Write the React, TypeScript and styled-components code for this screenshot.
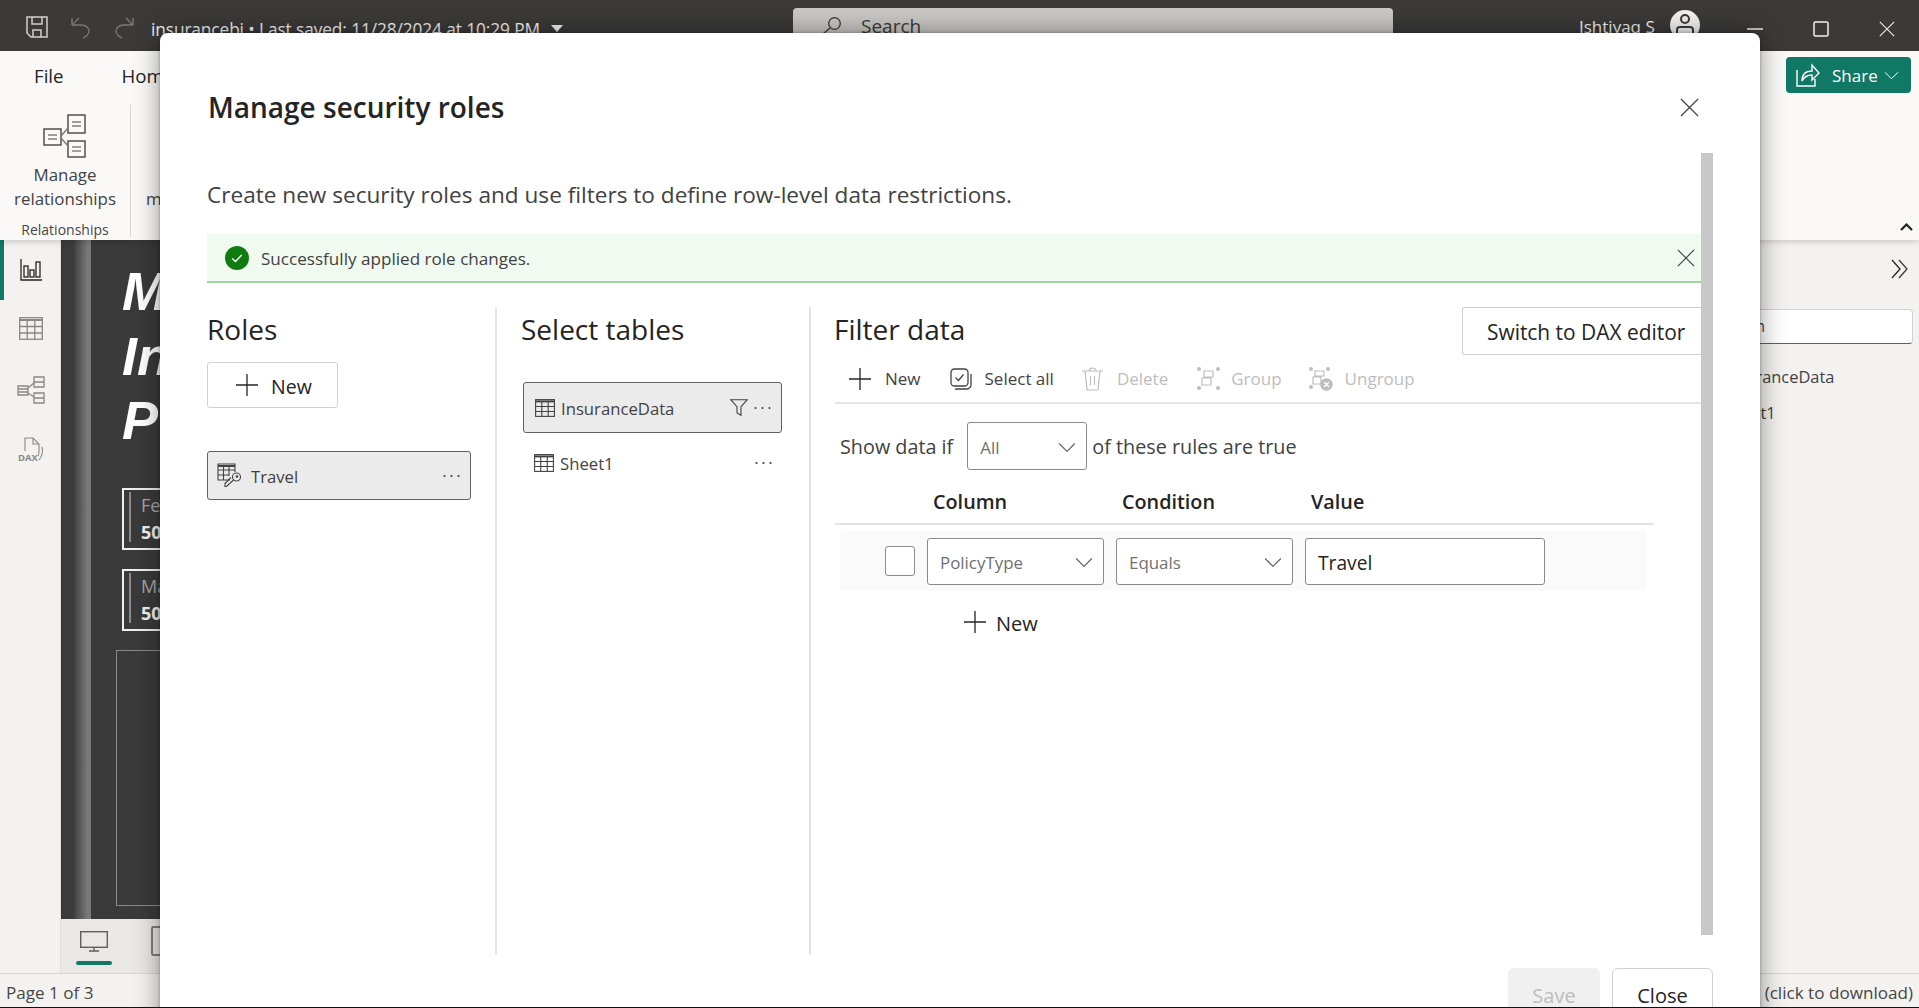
import React from "react";
import styled, { createGlobalStyle } from "styled-components";

const FONT = `"Open Sans", "Noto Sans", "Liberation Sans", sans-serif`;

const Global = createGlobalStyle`
  html, body { margin: 0; padding: 0; height: 100%; overflow: hidden; background: #f3f2f1; }
  body { font-family: ${FONT}; color: #242424; }
  * { box-sizing: border-box; }
  svg { display: block; flex: none; }
`;

const Shell = styled.div`
  width: 1919px; height: 1008px; display: flex; flex-direction: column; overflow: hidden; position: relative;
  border-bottom: 1px solid #111;
`;

/* title bar */
const TopBar = styled.header`
  height: 51px; flex: none; background: #3b3a39; display: flex; color: #f3f2f1;
`;
const TopLeft = styled.div`
  width: 793px; display: flex; padding: 16px 0 0 26px; align-items: flex-start;
`;
const QuickIcons = styled.div`display: flex; gap: 23px; margin-right: 17px;`;
const FileName = styled.span`font-size: 17.3px; line-height: 26px; margin-top: 1px; white-space: nowrap; letter-spacing: -.1px;`;
const Caret = styled.span`
  width: 0; height: 0; margin: 9px 0 0 11px;
  border-left: 6px solid transparent; border-right: 6px solid transparent; border-top: 7px solid #f3f2f1;
`;
const SearchBox = styled.div`
  width: 600px; height: 36px; margin-top: 8px; border-radius: 4px; background: #c9c8c6;
  display: flex; align-items: center; gap: 19px; padding-left: 29px; color: #3b3a39; font-size: 19px;
`;
const TopRight = styled.div`flex: 1; position: relative; display: flex; padding: 9px 0 0 186px;`;
const UserName = styled.span`font-size: 17px; line-height: 26px; margin-top: 5px; white-space: nowrap; width: 91px;`;
const Avatar = styled.div`
  width: 30px; height: 30px; border-radius: 50%; background: #f3f2f1; margin-top: 1px;
  display: flex; align-items: center; justify-content: center;
`;
const WindowButtons = styled.div`display: flex; align-items: center; height: 16px; margin: 12px 0 0 47px; gap: 50px;`;

/* ribbon */
const Ribbon = styled.section`
  height: 189px; flex: none; background: #faf9f8; position: relative; z-index: 1;
  box-shadow: 0 2px 6px rgba(0,0,0,.16); display: flex; flex-direction: column;
`;
const TabRow = styled.nav`height: 48px; flex: none; display: flex; align-items: center; padding: 0 8px 0 34px; color: #242424; font-size: 18.7px;`;
const Tab = styled.span`margin: 0 58px 0 0;`;
const ShareButton = styled.div`
  margin: 0 0 0 auto; height: 36px; width: 125px; background: #117865; color: #fff; border-radius: 4px;
  display: flex; align-items: center; padding-left: 9px; gap: 10px; font-size: 17px;
`;
const ShareLabel = styled.span`margin: 0 -4px 0 2px;`;
const GroupRow = styled.div`flex: 1; min-height: 0; display: flex; padding: 6px 0 3px;`;
const RibbonGroup = styled.div`
  width: 131px; border-right: 1px solid #d8d6d4; display: flex; flex-direction: column; align-items: center;
  padding-top: 9px; color: #424242; font-size: 16.9px; line-height: 24px; text-align: center;
`;
const GroupLabel = styled.span`font-size: 14px; line-height: 20px; margin-top: 9px; flex: none; color: #484644;`;
const RibbonItemText = styled.div`margin-top: 5px; flex: none; white-space: nowrap;`;
const NextGroup = styled.div`margin: 82px 0 0 15px; height: 24px; font-size: 16.9px; line-height: 24px; color: #424242;`;
const Collapse = styled.div`margin: auto 6px 6px auto;`;

/* main */
const Main = styled.div`flex: 1; display: flex; min-height: 0;`;
const Rail = styled.aside`
  width: 61px; flex: none; background: #f3f2f1; border-right: 1px solid #e1dfdd; display: flex; flex-direction: column;
`;
const RailItem = styled.div<{ $active?: boolean }>`
  height: 60px; display: flex; align-items: center; justify-content: center;
  border-left: 4px solid ${(p) => (p.$active ? "#117865" : "transparent")}; padding-right: 2px;
`;
const Center = styled.div`flex: 1; min-width: 0; display: flex; flex-direction: column;`;
const Canvas = styled.div`flex: 1; min-height: 0; background: #3a3a3a; display: flex; overflow: hidden;`;
const Gutter = styled.div`
  width: 30px; flex: none;
  background: linear-gradient(90deg, #3a3a3a 0, #3c3c3c 12px, #7b7b7b 27px, #777 30px);
`;
const ReportPage = styled.div`flex: 1; padding: 19px 0 0 31px;`;
const ReportTitle = styled.h1`
  margin: 0; font-size: 54px; line-height: 64.5px; font-weight: 800; font-style: italic; color: #fff;
  font-family: "Liberation Sans", sans-serif;
`;
const KpiCard = styled.div<{ $gap: number }>`
  width: 300px; height: 62px; margin-top: ${(p) => p.$gap}px; border: 2px solid #f0f0f0; padding: 4px 0 4px 5px;
`;
const KpiInner = styled.div`
  height: 100%; border-left: 2px solid #8a8a8a; padding-left: 10px; margin-top: -2px; font-size: 18px; line-height: 27px; color: #a6a6a6;
`;
const KpiValue = styled.div`color: #f2f2f2; font-weight: 700;`;
const ChartFrame = styled.div`width: 1000px; height: 256px; margin: 19px 0 0 -6px; border: 1px solid #8a8a8a;`;
const PageBar = styled.div`
  height: 54px; flex: none; background: #e9e8e6; display: flex; align-items: flex-start; padding: 7px 0 0 15px; gap: 39px;
`;
const ViewTab = styled.div`display: flex; flex-direction: column; align-items: center; width: 36px; padding-top: 5px;`;
const ViewUnderline = styled.div`width: 36px; height: 4px; border-radius: 2px; background: #117865; margin-top: 9px;`;
const RightPane = styled.aside`
  width: 219px; flex: none; background: #f3f2f1; padding: 19px 6px 0 13px; display: flex; flex-direction: column;
  font-size: 16.4px; color: #424242;
`;
const PaneToggle = styled.div`align-self: flex-end; margin-right: 4px;`;
const PaneSearch = styled.div`
  height: 35px; margin: 30px 0 15px; background: #fff; border: 1px solid #d1d1d1; border-bottom-color: #616161;
  border-radius: 4px; padding-left: 2px; line-height: 33px; font-size: 15.5px;
`;
const PaneItem = styled.div`height: 36px; line-height: 36px; padding-left: 10px;`;
const StatusBar = styled.footer`
  height: 34px; flex: none; background: #f3f2f1; border-top: 1px solid #d8d6d4; display: flex;
  justify-content: space-between; align-items: center; padding: 3px 6px 0; font-size: 17.1px; color: #484644;
`;

/* dialog */
const Dialog = styled.div`
  position: absolute; left: 160px; top: 33px; width: 1600px; height: 1040px; background: #fff; border-radius: 8px 8px 0 0;
  box-shadow: 0 0 26px rgba(0,0,0,.42), 0 0 3px rgba(0,0,0,.3); z-index: 5; display: flex; flex-direction: column; padding-left: 47px;
`;
const DialogHeader = styled.div`
  height: 120px; flex: none; display: flex; align-items: flex-start; justify-content: space-between; padding: 54px 61px 0 1px;
`;
const DialogTitle = styled.h2`margin: 0; font-size: 28px; line-height: 40px; font-weight: 600; color: #242424;`;
const DialogClose = styled.div`margin-top: 11px;`;
const DialogBody = styled.div`height: 816px; flex: none; display: flex; align-items: flex-start;`;
const Scroller = styled.div`width: 1494px; flex: none;`;
const ScrollThumb = styled.div`width: 12px; height: 782px; background: #c8c8c8;`;
const Description = styled.p`margin: 0; height: 81px; padding-top: 24px; font-size: 22.6px; line-height: 36px; color: #424242; white-space: nowrap;`;
const Notice = styled.div`
  height: 49px; background: #f1faf1; border-bottom: 2px solid #9fd89f; display: flex; align-items: center;
  padding: 0 6px 0 18px; font-size: 17.1px; color: #424242; gap: 12px;
`;
const NoticeText = styled.span`flex: 1; padding-top: 2px;`;
const Columns = styled.div`margin-top: 24px; height: 648px; display: flex;`;
const RolesColumn = styled.section`width: 288px; flex: none;`;
const TablesColumn = styled.section`width: 314px; flex: none; border-left: 2px solid #e4e4e4; padding-left: 26px;`;
const FilterColumn = styled.section`flex: 1; min-width: 0; border-left: 2px solid #e4e4e4; padding-left: 24px;`;
const ColumnTitle = styled.h3<{ $shift: number }>`
  margin: 0 0 2px ${(p) => p.$shift}px; font-size: 28px; line-height: 44px; font-weight: 400; color: #242424;
`;
const OutlineButton = styled.div`
  width: 131px; height: 46px; margin-top: 11px; border: 1px solid #d1d1d1; border-radius: 3px; display: flex;
  align-items: center; padding: 0 0 0 27px; gap: 12px; font-size: 19.5px; font-weight: 500; color: #242424;
`;
const ButtonLabel = styled.span`padding-top: 2px;`;
const ListRow = styled.div<{ $selected?: boolean; $w: number; $h: number; $mt: number; $pl: number }>`
  width: ${(p) => p.$w}px; height: ${(p) => p.$h}px; margin-top: ${(p) => p.$mt}px; padding: 0 10px 0 ${(p) => p.$pl}px;
  display: flex; align-items: center; font-size: 16.7px; color: #424242; border-radius: 3px;
  ${(p) => (p.$selected ? "background:#ebebeb;border:1px solid #616161;" : "")}
`;
const RowName = styled.span<{ $ml: number }>`flex: 1; margin-left: ${(p) => p.$ml}px; padding-top: 1px; white-space: nowrap;`;
const FunnelSlot = styled.span`margin-right: 6px;`;
const FilterHead = styled.div`height: 48px; display: flex; justify-content: space-between;`;
const DaxButton = styled.div`
  width: 239px; height: 48px; border: 1px solid #d1d1d1; border-right: 0; border-radius: 3px 0 0 3px;
  display: flex; align-items: center; padding: 2px 0 0 24px; font-size: 20.9px; font-weight: 500; color: #242424; white-space: nowrap;
`;
const Toolbar = styled.div`height: 49px; display: flex; align-items: center; border-bottom: 2px solid #e4e4e4;`;
const ToolItem = styled.div<{ $disabled?: boolean; $left: number; $gap: number }>`
  display: flex; align-items: center; margin-left: ${(p) => p.$left}px; gap: ${(p) => p.$gap}px; font-size: 17px;
  color: ${(p) => (p.$disabled ? "#bdbdbd" : "#424242")}; white-space: nowrap;
`;
const ShowRow = styled.div`
  margin-top: 18px; height: 48px; display: flex; align-items: center; padding-left: 5px; font-size: 19.8px; color: #424242;
`;
const Select = styled.div<{ $w: number; $h: number }>`
  width: ${(p) => p.$w}px; height: ${(p) => p.$h}px; flex: none; background: #fff; border: 1px solid #8a8a8a; border-radius: 3px;
  display: flex; align-items: center; justify-content: space-between; padding: 2px 10px 0 12px;
  font-size: 16.9px; color: #707070;
`;
const ShowLabel = styled.span<{ $ml: number }>`margin-left: ${(p) => p.$ml}px; white-space: nowrap;`;
const ColumnsHead = styled.div`
  width: 819px; height: 55px; border-bottom: 2px solid #e4e4e4; display: flex; padding: 17px 0 0 98px;
  font-size: 19.8px; font-weight: 600; line-height: 30px; color: #242424;
`;
const HeadCell = styled.span`width: 189px;`;
const RuleRow = styled.div`
  width: 806px; height: 60px; margin: 6px 0 0 5px; background: #fafafa; border-radius: 3px;
  display: flex; align-items: center; padding-left: 45px; gap: 12px;
`;
const CheckBox = styled.div`width: 30px; height: 30px; flex: none; background: #fff; border: 1px solid #8a8a8a; border-radius: 3px;`;
const ValueInput = styled.div`
  width: 240px; height: 47px; background: #fff; border: 1px solid #8a8a8a; border-radius: 3px;
  display: flex; align-items: center; padding: 3px 0 0 12px; font-size: 19.2px; color: #242424;
`;
const AddRule = styled.div`
  margin: 19px 0 0 128px; display: flex; align-items: center; gap: 9px; font-size: 20px; font-weight: 500; color: #242424; height: 24px;
`;
const DialogFooter = styled.div`display: flex; justify-content: flex-end; gap: 12px; padding-right: 47px; margin-top: -1px;`;
const FooterButton = styled.div<{ $primary?: boolean; $w: number }>`
  width: ${(p) => p.$w}px; height: 52px; border-radius: 6px 6px 0 0; display: flex; align-items: center; justify-content: center;
  padding-top: 2px; font-size: 20px; font-weight: 500;
  ${(p) => (p.$primary ? "background:#f0f0f0;color:#bdbdbd;" : "background:#fff;border:1px solid #d1d1d1;color:#242424;")}
`;

/* icons */
type P = { c?: string; s?: number };
const Cross = ({ c = "#424242", s = 20 }: P) => (
  <svg width={s} height={s} viewBox="0 0 20 20" fill="none" stroke={c} strokeWidth="1.3"><path d="M1 1l18 18M19 1L1 19" /></svg>
);
const Plus = ({ c = "#242424", s = 24 }: P) => (
  <svg width={s} height={s} viewBox="0 0 24 24" fill="none" stroke={c} strokeWidth="1.3"><path d="M12 1v22M1 12h22" /></svg>
);
const Chevron = ({ c = "#616161", s = 18 }: P) => (
  <svg width={s} height={s * 0.6} viewBox="0 0 18 11" fill="none" stroke={c} strokeWidth="1.2"><path d="M1 1.5l8 8 8-8" /></svg>
);
const Dots = ({ c = "#424242" }: P) => (
  <svg width="17" height="4" viewBox="0 0 17 4" fill={c}><circle cx="1.5" cy="2" r="1.1" /><circle cx="8.5" cy="2" r="1.1" /><circle cx="15.5" cy="2" r="1.1" /></svg>
);
const TableGlyph = ({ c = "#424242" }: P) => (
  <svg width="20" height="18" viewBox="0 0 20 18" fill="none" stroke={c} strokeWidth="1.1">
    <rect x=".6" y=".6" width="18.8" height="16.8" /><path d="M.6 2.4h18.8" strokeWidth="2" /><path d="M.6 7.5h18.8M.6 12.5h18.8M6.8 3v14M13.2 3v14" />
  </svg>
);
const RoleIcon = () => (
  <svg width="25" height="25" viewBox="0 0 25 25" fill="none" stroke="#424242" strokeWidth="1.1">
    <path d="M13 17H1V1h17v8" /><path d="M1 3h17" strokeWidth="2" /><path d="M1 7h17M1 12h11M6.5 4v13M12 4v9" />
    <circle cx="19.5" cy="14" r="4" /><path d="M16.5 17l-7 6.5h-1.5v-3l6-6" /><circle cx="20" cy="13.5" r=".8" fill="#424242" />
  </svg>
);
const SaveIcon = () => (
  <svg width="22" height="22" viewBox="0 0 22 22" fill="none" stroke="#d2d0ce" strokeWidth="1.5">
    <path d="M1 1h20v20H5l-4-4z" /><path d="M6 1v7h10V1M7 21v-7h8v7" />
  </svg>
);
const ArrowBack = ({ flip }: { flip?: boolean }) => (
  <svg width="20" height="23" viewBox="0 0 20 23" fill="none" stroke="#797775" strokeWidth="1.4" transform={flip ? "scale(-1 1)" : undefined}>
    <path d="M1 9l7-7M1 9h9c5 0 8 3 8 6s-2 5-6 7M1 9v-7" />
  </svg>
);
const RelationIcon = () => (
  <svg width="44" height="44" viewBox="0 0 44 44" fill="none" stroke="#484644" strokeWidth="1.4">
    <rect x="1" y="15" width="17" height="16" /><rect x="25" y="1" width="17" height="18" /><rect x="25" y="27" width="17" height="16" />
    <path d="M5 21h9M5 25h9M29 8h9M29 12h9M29 33h9M29 37h9" strokeWidth="1" /><path d="M18 22l7-8M18 24l7 8" stroke="#797775" />
  </svg>
);
const ShareIcon = () => (
  <svg width="25" height="26" viewBox="0 0 25 26" fill="none" stroke="#fff" strokeWidth="1.4">
    <path d="M2 8v16h18v-7" /><path d="M7 19c0-7 4-10 10-10V3l7 8-7 7v-5c-5 0-8 2-10 6z" />
  </svg>
);
const ReportIcon = () => (
  <svg width="22" height="22" viewBox="0 0 22 22" fill="none" stroke="#252423" strokeWidth="1.3">
    <path d="M1 0v21h21" /><rect x="4" y="7" width="4" height="11" /><rect x="10" y="11" width="4" height="7" /><rect x="16" y="3" width="4" height="15" />
  </svg>
);
const GridIcon = () => (
  <svg width="24" height="26" viewBox="0 0 24 26" fill="none" stroke="#8a8886" strokeWidth="1.3">
    <rect x=".7" y=".7" width="22.6" height="21.6" /><path d="M.7 3h22.6" strokeWidth="2" /><path d="M.7 9.5h22.6M.7 16h22.6M8.2 3v19M15.8 3v19" />
  </svg>
);
const ModelIcon = () => (
  <svg width="28" height="28" viewBox="0 0 28 28" fill="none" stroke="#8a8886" strokeWidth="1.3">
    <path d="M1 10h10v6H1zM1 13h10v6H1z" /><path d="M17 1h10v5H17zM17 6h10v5H17zM17 17h10v5H17zM17 22h10v5H17z" /><path d="M11 12l6-5M11 17l6 4" />
  </svg>
);
const DaxIcon = () => (
  <svg width="27" height="26" viewBox="0 0 27 26" fill="none" stroke="#8a8886" strokeWidth="1.1">
    <path d="M7 14V1h8l6 6v7c0 1 0 4-1 5" /><path d="M15 1v6h6M24 10c1 4 1 8-3 13" />
    <text x="0" y="24" fontSize="9.5" fontWeight="700" fill="#8a8886" stroke="none" fontFamily="Open Sans">DAX</text>
  </svg>
);
const Monitor = () => (
  <svg width="28" height="21" viewBox="0 0 28 21" fill="none" stroke="#605e5c" strokeWidth="1.4">
    <rect x=".7" y=".7" width="26.6" height="15.6" /><path d="M14 16v4M9 20h10" />
  </svg>
);
const Phone = () => (
  <svg width="34" height="30" viewBox="0 0 34 30" fill="none" stroke="#605e5c" strokeWidth="1.5"><rect x="1" y="1" width="32" height="28" rx="1" /></svg>
);
const Magnifier = () => (
  <svg width="20" height="18" viewBox="0 0 20 18" fill="none" stroke="#3b3a39" strokeWidth="1.3"><circle cx="12.5" cy="6.5" r="5.8" /><path d="M8 11l-7 6" /></svg>
);
const UserGlyph = () => (
  <svg width="20" height="24" viewBox="0 0 20 24" fill="none" stroke="#3b3a39" strokeWidth="2"><circle cx="10" cy="6" r="4" /><path d="M2 24v-7c0-2 1-3 3-3h10c2 0 3 1 3 3v7" /></svg>
);
const Minimize = () => <svg width="16" height="2" viewBox="0 0 16 2"><path d="M0 1h16" stroke="#f3f2f1" strokeWidth="1.5" /></svg>;
const Maximize = () => <svg width="16" height="16" viewBox="0 0 16 16" fill="none"><rect x="1" y="1" width="14" height="14" rx="1.5" stroke="#f3f2f1" strokeWidth="1.5" /></svg>;
const CaretUp = () => <svg width="13" height="8" viewBox="0 0 13 8" fill="none" stroke="#252423" strokeWidth="2.2"><path d="M1 7l5.5-5.5L12 7" /></svg>;
const DoubleChevron = () => (
  <svg width="18" height="20" viewBox="0 0 18 20" fill="none" strokeWidth="1.3"><path d="M1 1l8 9-8 9" stroke="#252423" /><path d="M8 1l8 9-8 9" stroke="#3a3a3a" /></svg>
);
const SuccessIcon = () => (
  <svg width="24" height="24" viewBox="0 0 24 24"><circle cx="12" cy="12" r="12" fill="#107c10" /><path d="M7.3 12.4l3.2 3.1 6.2-6.6" fill="none" stroke="#fff" strokeWidth="1.4" /></svg>
);
const Funnel = () => (
  <svg width="18" height="17" viewBox="0 0 18 17" fill="none" stroke="#424242" strokeWidth="1.1"><path d="M.7.7h16.6l-6.3 7v8.6l-4-2.4V7.7z" /></svg>
);
const SelectAllIcon = () => (
  <svg width="22" height="22" viewBox="0 0 22 22" fill="none" stroke="#424242" strokeWidth="1.3">
    <rect x="1" y="1" width="17" height="17" rx="3.5" /><path d="M5.5 9.5l3 3 5-6" /><path d="M21 6v11c0 2-2 4-4 4H5" />
  </svg>
);
const TrashIcon = () => (
  <svg width="21" height="24" viewBox="0 0 21 24" fill="none" stroke="#bdbdbd" strokeWidth="1.2">
    <path d="M0 4h21M7 4c0-4 7-4 7 0M3 4l2 19h11l2-19M8.5 9v9M12.5 9v9" />
  </svg>
);
const GroupIcon = () => (
  <svg width="23" height="23" viewBox="0 0 23 23" fill="none" stroke="#bdbdbd" strokeWidth="1.2">
    <g fill="#bdbdbd" stroke="none"><circle cx="2" cy="2" r="2" /><circle cx="21" cy="2" r="2" /><circle cx="2" cy="21" r="2" /><circle cx="21" cy="21" r="2" /></g>
    <path d="M7 4h9v6H7zM5 11h9v7H5z" />
  </svg>
);
const UngroupIcon = () => (
  <svg width="24" height="24" viewBox="0 0 24 24" fill="none" stroke="#bdbdbd" strokeWidth="1.2">
    <g fill="#bdbdbd" stroke="none"><circle cx="2" cy="2" r="2" /><circle cx="19" cy="2" r="2" /><circle cx="2" cy="20" r="2" /></g>
    <path d="M6 4h9v5H6zM4 10h8v7H4z" /><circle cx="17.5" cy="17.5" r="6.2" fill="#bdbdbd" stroke="none" /><path d="M15 15l5 5M20 15l-5 5" stroke="#fff" strokeWidth="1.4" />
  </svg>
);

export default function App() {
  return (
    <>
      <Global />
      <Shell>
        <TopBar>
          <TopLeft>
            <QuickIcons>
              <SaveIcon />
              <ArrowBack />
              <ArrowBack flip />
            </QuickIcons>
            <FileName>insurancebi • Last saved: 11/28/2024 at 10:29 PM</FileName>
            <Caret />
          </TopLeft>
          <SearchBox>
            <Magnifier />
            <span>Search</span>
          </SearchBox>
          <TopRight>
            <UserName>Ishtiyaq S</UserName>
            <Avatar><UserGlyph /></Avatar>
            <WindowButtons>
              <Minimize />
              <Maximize />
              <Cross c="#f3f2f1" s={16} />
            </WindowButtons>
          </TopRight>
        </TopBar>

        <Ribbon>
          <TabRow>
            <Tab>File</Tab>
            <Tab>Home</Tab>
            <ShareButton>
              <ShareIcon />
              <ShareLabel>Share</ShareLabel>
              <Chevron c="#fff" s={15} />
            </ShareButton>
          </TabRow>
          <GroupRow>
            <RibbonGroup>
              <RelationIcon />
              <RibbonItemText>Manage<br />relationships</RibbonItemText>
              <GroupLabel>Relationships</GroupLabel>
            </RibbonGroup>
            <NextGroup>m</NextGroup>
            <Collapse><CaretUp /></Collapse>
          </GroupRow>
        </Ribbon>

        <Main>
          <Rail>
            <RailItem $active><ReportIcon /></RailItem>
            <RailItem><GridIcon /></RailItem>
            <RailItem><ModelIcon /></RailItem>
            <RailItem><DaxIcon /></RailItem>
          </Rail>
          <Center>
            <Canvas>
              <Gutter />
              <ReportPage>
                <ReportTitle>M<br />In<br />P</ReportTitle>
                <KpiCard $gap={35}><KpiInner>Fe<KpiValue>50</KpiValue></KpiInner></KpiCard>
                <KpiCard $gap={19}><KpiInner>Ma<KpiValue>50</KpiValue></KpiInner></KpiCard>
                <ChartFrame />
              </ReportPage>
            </Canvas>
            <PageBar>
              <ViewTab><Monitor /><ViewUnderline /></ViewTab>
              <Phone />
            </PageBar>
          </Center>
          <RightPane>
            <PaneToggle><DoubleChevron /></PaneToggle>
            <PaneSearch>Search</PaneSearch>
            <PaneItem>InsuranceData</PaneItem>
            <PaneItem>Sheet1</PaneItem>
          </RightPane>
        </Main>

        <StatusBar>
          <span>Page 1 of 3</span>
          <span>(click to download)</span>
        </StatusBar>

        <Dialog>
          <DialogHeader>
            <DialogTitle>Manage security roles</DialogTitle>
            <DialogClose><Cross s={19} /></DialogClose>
          </DialogHeader>
          <DialogBody>
            <Scroller>
              <Description>Create new security roles and use filters to define row-level data restrictions.</Description>
              <Notice>
                <SuccessIcon />
                <NoticeText>Successfully applied role changes.</NoticeText>
                <Cross s={18} />
              </Notice>
              <Columns>
                <RolesColumn>
                  <ColumnTitle $shift={0}>Roles</ColumnTitle>
                  <OutlineButton><Plus /><ButtonLabel>New</ButtonLabel></OutlineButton>
                  <ListRow $selected $w={264} $h={49} $mt={43} $pl={9}>
                    <RoleIcon />
                    <RowName $ml={9}>Travel</RowName>
                    <Dots />
                  </ListRow>
                </RolesColumn>
                <TablesColumn>
                  <ColumnTitle $shift={-2}>Select tables</ColumnTitle>
                  <ListRow $selected $w={259} $h={51} $mt={31} $pl={11}>
                    <TableGlyph />
                    <RowName $ml={6}>InsuranceData</RowName>
                    <FunnelSlot><Funnel /></FunnelSlot>
                    <Dots />
                  </ListRow>
                  <ListRow $w={259} $h={40} $mt={10} $pl={11}>
                    <TableGlyph />
                    <RowName $ml={6}>Sheet1</RowName>
                    <Dots />
                  </ListRow>
                </TablesColumn>
                <FilterColumn>
                  <FilterHead>
                    <ColumnTitle $shift={-1}>Filter data</ColumnTitle>
                    <DaxButton>Switch to DAX editor</DaxButton>
                  </FilterHead>
                  <Toolbar>
                    <ToolItem $left={13} $gap={13}><Plus />New</ToolItem>
                    <ToolItem $left={29} $gap={13}><SelectAllIcon />Select all</ToolItem>
                    <ToolItem $left={28} $gap={14} $disabled><TrashIcon />Delete</ToolItem>
                    <ToolItem $left={29} $gap={11} $disabled><GroupIcon />Group</ToolItem>
                    <ToolItem $left={27} $gap={12} $disabled><UngroupIcon />Ungroup</ToolItem>
                  </Toolbar>
                  <ShowRow>
                    <span>Show data if</span>
                    <ShowLabel $ml={14}><Select $w={120} $h={48}>All<Chevron /></Select></ShowLabel>
                    <ShowLabel $ml={5}>of these rules are true</ShowLabel>
                  </ShowRow>
                  <ColumnsHead>
                    <HeadCell>Column</HeadCell>
                    <HeadCell>Condition</HeadCell>
                    <HeadCell>Value</HeadCell>
                  </ColumnsHead>
                  <RuleRow>
                    <CheckBox />
                    <Select $w={177} $h={47}>PolicyType<Chevron /></Select>
                    <Select $w={177} $h={47}>Equals<Chevron /></Select>
                    <ValueInput>Travel</ValueInput>
                  </RuleRow>
                  <AddRule><Plus /><ButtonLabel>New</ButtonLabel></AddRule>
                </FilterColumn>
              </Columns>
            </Scroller>
            <ScrollThumb />
          </DialogBody>
          <DialogFooter>
            <FooterButton $primary $w={92}>Save</FooterButton>
            <FooterButton $w={101}>Close</FooterButton>
          </DialogFooter>
        </Dialog>
      </Shell>
    </>
  );
}
